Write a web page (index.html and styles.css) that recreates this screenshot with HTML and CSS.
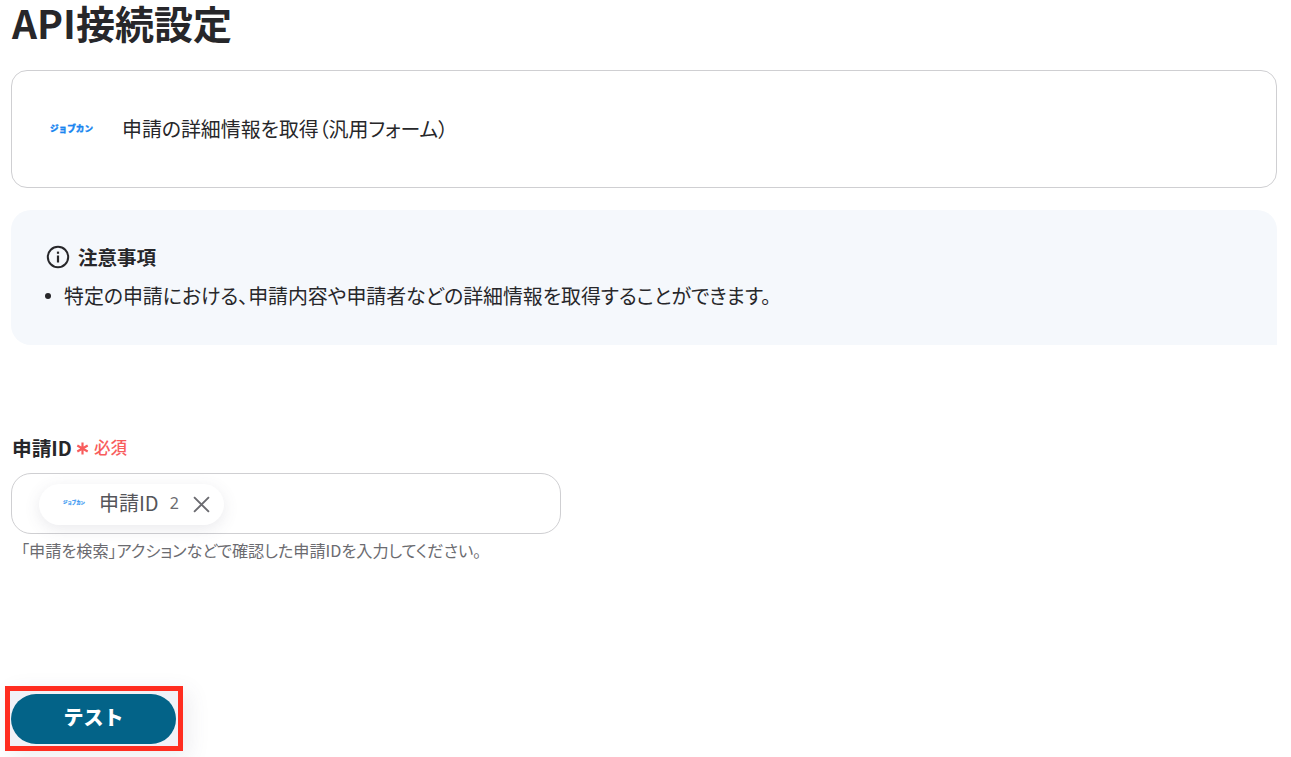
FILE: index.html
```html
<!DOCTYPE html>
<html lang="ja">
<head>
<meta charset="utf-8">
<title>API接続設定</title>
<link rel="stylesheet" href="styles.css">
</head>
<body>
<main class="page">
  <h1 class="title">API接続設定</h1>
  <section class="action-card">
    <span class="logo">ジョブカン</span>
    <span class="action-name">申請の詳細情報を取得（汎用フォーム）</span>
  </section>
  <section class="notice">
    <div class="notice-head">
      <svg class="info-icon" viewBox="0 0 24 24" width="24" height="24" aria-hidden="true">
        <circle cx="12" cy="12" r="10.2" fill="none" stroke="#27272a" stroke-width="2"/>
        <rect x="10.9" y="10.5" width="2.2" height="7" fill="#27272a"/>
        <rect x="10.9" y="6.6" width="2.2" height="2.2" fill="#27272a"/>
      </svg>
      <strong>注意事項</strong>
    </div>
    <ul class="notice-list">
      <li>特定の申請における、申請内容や申請者などの詳細情報を取得することができます。</li>
    </ul>
  </section>
  <section class="field">
    <div class="field-label">
      <span class="label-text">申請ID</span>
      <svg class="req-star" viewBox="0 0 12 12" width="13" height="13" aria-hidden="true">
        <path d="M6 .5V11.5M1.2 3.2 10.8 8.8M10.8 3.2 1.2 8.8" stroke="#f85c5c" stroke-width="2" fill="none"/>
      </svg>
      <span class="req-text">必須</span>
    </div>
    <div class="input-box">
      <span class="chip">
        <span class="chip-logo">ジョブカン</span>
        <span class="chip-name">申請ID</span>
        <span class="chip-num">2</span>
        <svg class="chip-close" viewBox="0 0 16 16" width="17" height="17" aria-hidden="true">
          <path d="M1 1 15 15M15 1 1 15" stroke="#6b6b70" stroke-width="1.8" fill="none"/>
        </svg>
      </span>
    </div>
    <p class="help">「申請を検索」アクションなどで確認した申請IDを入力してください。</p>
  </section>
  <div class="action-row">
    <div class="highlight"><button class="test-btn" type="button">テスト</button></div>
  </div>
</main>
</body>
</html>
```

FILE: styles.css
```css
* { box-sizing: border-box; }
html, body { margin: 0; height: 100%; background: #fff; }
body {
  font-family: "Noto Sans CJK JP", "Noto Sans", sans-serif;
  color: #27272a;
  overflow: hidden;
}
.page { padding: 0 14px 0 11px; width: 1291px; height: 757px; display: flex; flex-direction: column; }
.title { margin: 0 0 0 1px; font-size: 39px; line-height: 44px; font-weight: 700; height: 70px; }
.action-card {
  height: 118px;
  border: 1px solid #cfcfd2;
  border-radius: 16px;
  display: flex;
  align-items: center;
  padding: 0 0 1px 38px;
}
.logo { width: 72px; font-size: 8.6px; font-weight: 900; color: #1a86f0; line-height: 1; -webkit-text-stroke: .3px #1a86f0; }
.action-name { font-size: 19.9px; font-feature-settings: "palt"; color: #27272a; }
.notice {
  margin-top: 22px;
  height: 135px;
  background: #f5f8fc;
  border-radius: 20px 20px 0 20px;
  padding: 32px 35px 0;
}
.notice-head { display: flex; align-items: center; gap: 8px; font-size: 19.5px; line-height: 30px; }
.info-icon { flex: none; }
.notice-head strong { font-weight: 700; }
.notice-list { list-style: none; margin: 11px 0 0; padding: 0; font-size: 19.9px; line-height: 26px; font-feature-settings: "palt"; }
.notice-list li { display: flex; align-items: center; gap: 13px; margin-left: -1px; }
.notice-list li::before { content: ""; flex: none; width: 6px; height: 6px; border-radius: 50%; background: #27272a; }
.field { margin-top: 90px; }
.field-label { display: flex; align-items: center; height: 24px; padding-left: 1px; }
.label-text { font-size: 19.7px; font-weight: 700; }
.req-star { margin: 3px 5px 0 4px; }
.req-text { font-size: 16.5px; font-weight: 500; color: #f85c5c; }
.input-box {
  margin-top: 14px;
  width: 550px;
  height: 61px;
  border: 1px solid #cfcfd2;
  border-radius: 20px;
  padding: 10px 0 0 27px;
}
.chip {
  display: inline-flex;
  align-items: center;
  height: 41px;
  width: 185px;
  background: #fff;
  border-radius: 21px;
  box-shadow: 0 4px 16px rgba(80, 80, 110, .12);
  padding: 0 0 4px 24px;
}
.chip-logo { width: 36px; font-size: 4.4px; font-weight: 900; color: #3a98f2; line-height: 1; -webkit-text-stroke: .2px #3a98f2; }
.chip-name { font-size: 20px; color: #55555a; }
.chip-num { margin-left: 11px; font-size: 16px; color: #6b6b70; font-family: "Noto Sans", sans-serif; }
.chip-close { margin: 4px 0 0 14px; }
.help { margin: 6px 0 0 10px; font-size: 16.15px; line-height: 20px; color: #6b6b70; font-feature-settings: "palt"; }
.action-row { margin-top: 126px; margin-left: -6px; }
.highlight {
  width: 178px;
  height: 65px;
  border: 5px solid #ff2d20;
  padding: 3px 0 0 1px;
  background: #f1f1f7;
  box-shadow: 6px 6px 20px rgba(80, 80, 110, .1);
}
.test-btn {
  display: block;
  width: 165px;
  height: 50px;
  border: 0;
  border-radius: 25px;
  background: #036388;
  color: #fff;
  font-family: inherit;
  font-size: 20px;
  font-weight: 900;
  padding: 0 0 5px;
}
```
